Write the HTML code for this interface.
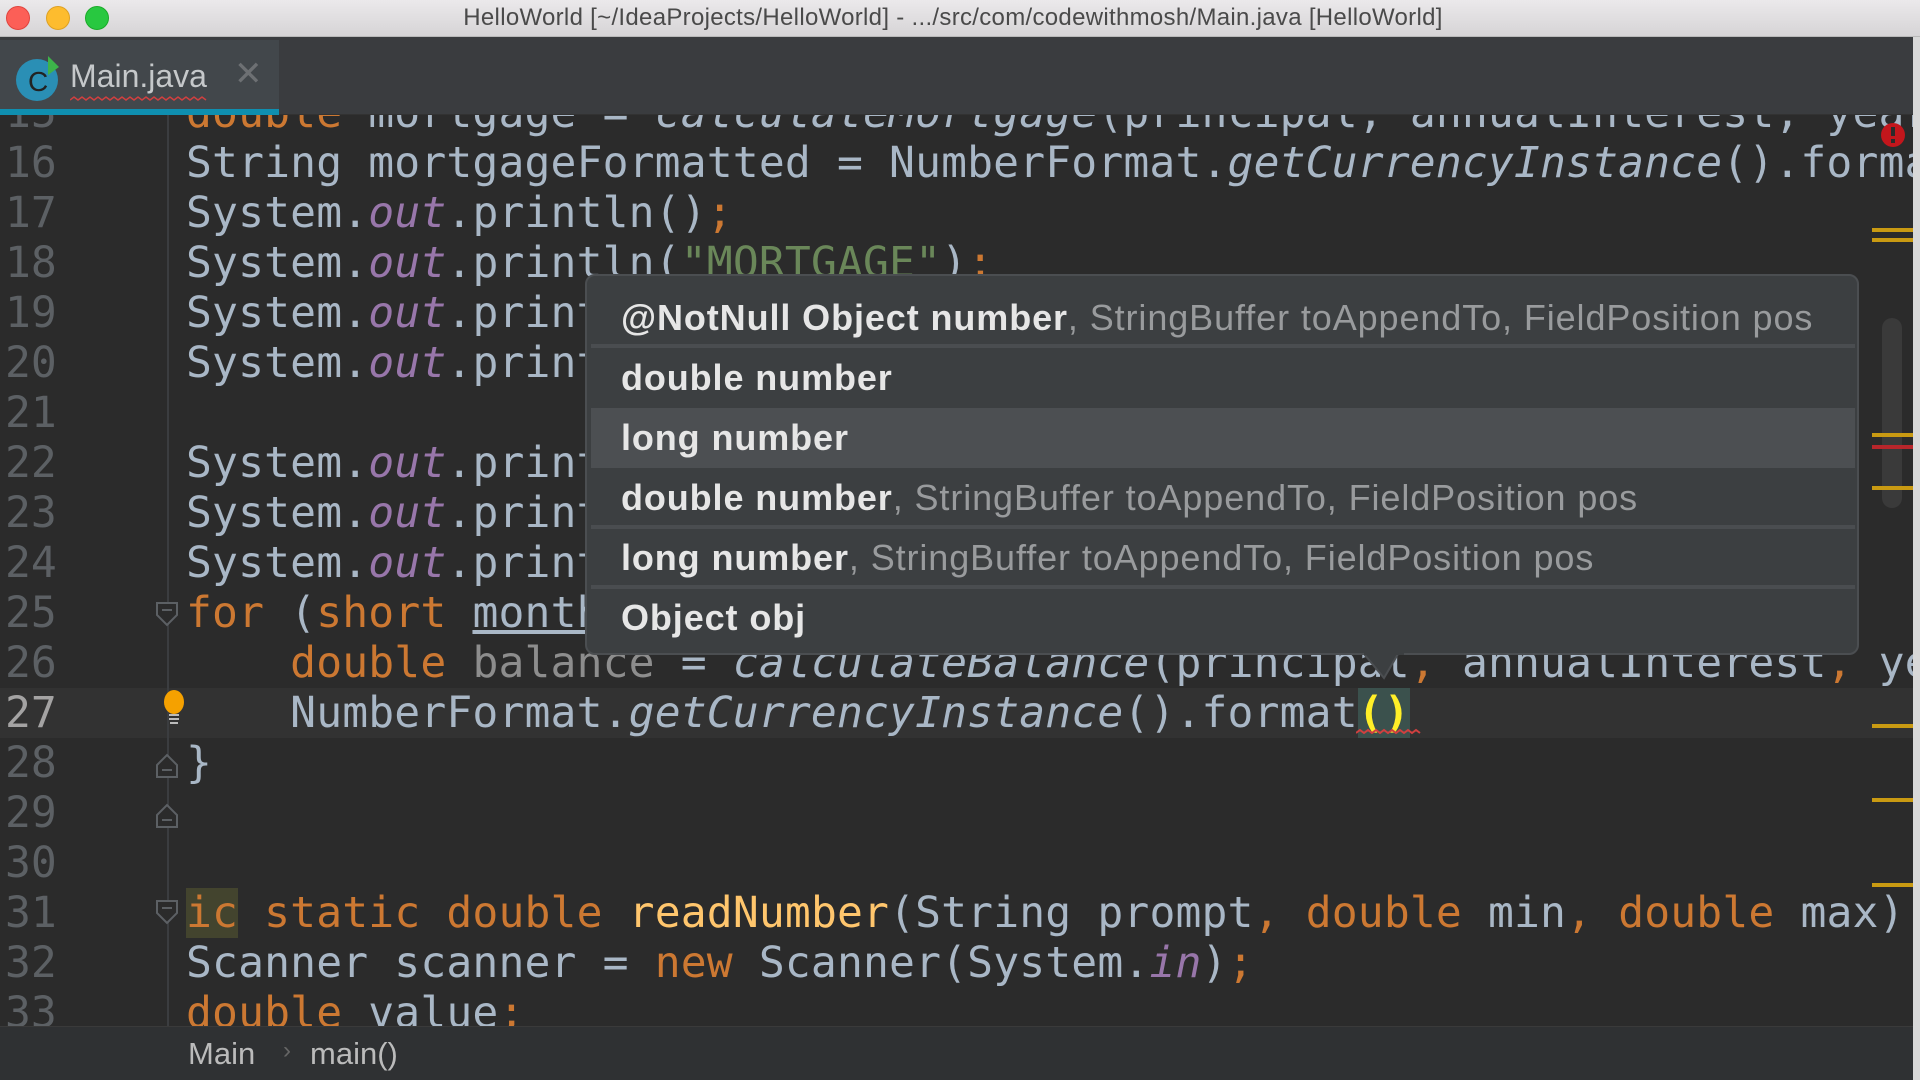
<!DOCTYPE html>
<html><head><meta charset="utf-8"><style>
*{margin:0;padding:0;box-sizing:border-box}
body{width:1920px;height:1080px;overflow:hidden;background:#2b2b2b;position:relative;font-family:"Liberation Sans",sans-serif}
#title{position:absolute;left:0;top:0;width:1920px;height:37px;background:linear-gradient(#ebe9eb,#d6d4d6);border-bottom:1px solid #b9b9b9}
#title .t{position:absolute;left:0;width:1906px;text-align:center;top:4px;font-size:24px;color:#4a4a4a;letter-spacing:0.3px}
.dot{position:absolute;top:6px;width:24px;height:24px;border-radius:50%}
#tabs{position:absolute;left:0;top:37px;width:1913px;height:78px;background:#3a3c3f;border-bottom:1px solid #323232}
#tab{position:absolute;left:0;top:3px;width:279px;height:75px;background:#42474b}
#tab .ul{position:absolute;left:0;bottom:0;width:279px;height:6px;background:#0f8fb0}
#tab .name{position:absolute;left:70px;top:18px;font-size:32px;color:#c5c8ca}
#tab .x{position:absolute;left:234px;top:14px;font-size:34px;color:#6d7073}
#code{position:absolute;left:0;top:115px;width:1913px;height:911px;overflow:hidden;background:#2b2b2b}
.ln{position:absolute;left:0;width:150px;font:43px "DejaVu Sans Mono",monospace;color:#5c6064;line-height:50px;padding-left:5px}
.cl{position:absolute;left:186px;white-space:pre;font:43px "DejaVu Sans Mono",monospace;color:#a9b7c6;line-height:50px;letter-spacing:0.15px}
.k{color:#cc7832}.f{color:#9876aa;font-style:italic}.s{color:#6a8759}.i{font-style:italic}.m{color:#ffc66d}
#gl{position:absolute;left:167px;top:0;width:2px;height:911px;background:#3b3d40}
#popup{position:absolute;left:585px;top:274px;width:1274px;height:381px;background:#3c3f41;border:2px solid #4b4e51;border-radius:10px;overflow:hidden}
.row{position:absolute;left:4px;width:1264px;height:60px;background:#3c3f41;font-size:36px;color:#999b9d;line-height:60px;padding-left:30px;white-space:nowrap;letter-spacing:0.9px}
.row b{color:#e6e6e6}
#right{position:absolute;left:1913px;top:37px;width:7px;height:1043px;background:#d8d8d8}
.mk{position:absolute;left:1872px;width:41px;height:4px;background:#c99a12}
#bottom{position:absolute;left:0;top:1026px;width:1913px;height:54px;background:#2f3133;border-top:1px solid #3a3a3a;font-size:31px;color:#bbbbbb}
</style></head><body>
<div id="title">
<div class="dot" style="left:6px;background:#fc5f57;border:1px solid #e0443e"></div>
<div class="dot" style="left:46px;background:#fdbc2e;border:1px solid #dea123"></div>
<div class="dot" style="left:85px;background:#28c840;border:1px solid #1aab29"></div>
<div class="t">HelloWorld [~/IdeaProjects/HelloWorld] - .../src/com/codewithmosh/Main.java [HelloWorld]</div>
</div>
<div id="tabs"><div id="tab">
<svg style="position:absolute;left:13px;top:13px" width="50" height="50"><circle cx="24" cy="27" r="21" fill="#2a8fb5"/><text x="15" y="38" font-family="Liberation Sans" font-size="28" fill="#222">C</text><polygon points="35,3 46,14 35,22" fill="#3db34a"/></svg>
<div class="name">Main.java</div>
<svg style="position:absolute;left:70px;top:56px" width="150" height="6"><path d="M0 4 l4 -3 l4 3 l4 -3 l4 3 l4 -3 l4 3 l4 -3 l4 3 l4 -3 l4 3 l4 -3 l4 3 l4 -3 l4 3 l4 -3 l4 3 l4 -3 l4 3 l4 -3 l4 3 l4 -3 l4 3 l4 -3 l4 3 l4 -3 l4 3 l4 -3 l4 3 l4 -3 l4 3 l4 -3 l4 3 l4 -3 l4 3" stroke="#d04040" fill="none" stroke-width="1.5"/></svg>
<div class="x">✕</div>
<div class="ul"></div></div></div>

<div id="code">
<div style="position:absolute;left:0;top:573px;width:1913px;height:50px;background:#323232"></div>
<div id="gl"></div>
<div class="ln" style="top:-27px">15</div>
<div class="ln" style="top:23px">16</div>
<div class="ln" style="top:73px">17</div>
<div class="ln" style="top:123px">18</div>
<div class="ln" style="top:173px">19</div>
<div class="ln" style="top:223px">20</div>
<div class="ln" style="top:273px">21</div>
<div class="ln" style="top:323px">22</div>
<div class="ln" style="top:373px">23</div>
<div class="ln" style="top:423px">24</div>
<div class="ln" style="top:473px">25</div>
<div class="ln" style="top:523px">26</div>
<div class="ln" style="top:573px;color:#a4a3a3">27</div>
<div class="ln" style="top:623px">28</div>
<div class="ln" style="top:673px">29</div>
<div class="ln" style="top:723px">30</div>
<div class="ln" style="top:773px">31</div>
<div class="ln" style="top:823px">32</div>
<div class="ln" style="top:873px">33</div>

<div class="cl" style="top:-27px"><span class="k">double</span> mortgage = <span class="i">calculateMortgage</span>(principal, annualInterest, years);</div>
<div class="cl" style="top:23px">String mortgageFormatted = NumberFormat.<span class="i">getCurrencyInstance</span>().format(mortgage);</div>
<div class="cl" style="top:73px">System.<span class="f">out</span>.println()<span class="k">;</span></div>
<div class="cl" style="top:123px">System.<span class="f">out</span>.println(<span class="s">"MORTGAGE"</span>)<span class="k">;</span></div>
<div class="cl" style="top:173px">System.<span class="f">out</span>.println</div>
<div class="cl" style="top:223px">System.<span class="f">out</span>.println</div>
<div class="cl" style="top:323px">System.<span class="f">out</span>.println</div>
<div class="cl" style="top:373px">System.<span class="f">out</span>.println</div>
<div class="cl" style="top:423px">System.<span class="f">out</span>.println</div>
<div class="cl" style="top:473px"><span class="k">for</span> (<span class="k">short</span> <u>month</u> = 1</div>
<div class="cl" style="top:523px">    <span class="k">double</span> <span style="color:#8d8d8d">balance</span> = <span class="i">calculateBalance</span>(principal<span class="k">,</span> annualInterest<span class="k">,</span> years</div>
<div class="cl" style="top:573px">    NumberFormat.<span class="i">getCurrencyInstance</span>().format<span style="color:#ffef28;font-weight:bold;background:#3b514d">()</span></div>
<div class="cl" style="top:623px">}</div>
<div class="cl" style="top:773px"><span class="k" style="background:#43442e">ic</span> <span class="k">static double</span> <span class="m">readNumber</span>(String prompt<span class="k">,</span> <span class="k">double</span> min<span class="k">,</span> <span class="k">double</span> max)</div>
<div class="cl" style="top:823px">Scanner scanner = <span class="k">new</span> Scanner(System.<span class="f">in</span>)<span class="k">;</span></div>
<div class="cl" style="top:873px"><span class="k">double</span> value<span class="k">;</span></div>
<svg style="position:absolute;left:1356px;top:613px" width="80" height="8"><path d="M0 5 l4 -3 l4 3 l4 -3 l4 3 l4 -3 l4 3 l4 -3 l4 3 l4 -3 l4 3 l4 -3 l4 3 l4 -3 l4 3 l4 -3 l4 3" stroke="#d04040" fill="none" stroke-width="2"/></svg>
<svg style="position:absolute;left:155px;top:570px" width="40" height="50"><ellipse cx="19" cy="17" rx="10" ry="12" fill="#f5a100"/><rect x="14" y="29" width="10" height="2" fill="#bbb"/><rect x="14" y="33" width="10" height="2" fill="#bbb"/><rect x="15" y="37" width="8" height="2" fill="#bbb"/></svg>
<svg style="position:absolute;left:154px;top:485px" width="30" height="30"><path d="M3 3 h20 v12 l-10 10 l-10 -10z" fill="#2b2b2b" stroke="#5c6064" stroke-width="2"/><path d="M8 10 h10" stroke="#5c6064" stroke-width="2"/></svg>
<svg style="position:absolute;left:154px;top:635px" width="30" height="30"><path d="M3 27 h20 v-12 l-10 -10 l-10 10z" fill="#2b2b2b" stroke="#5c6064" stroke-width="2"/><path d="M8 20 h10" stroke="#5c6064" stroke-width="2"/></svg>
<svg style="position:absolute;left:154px;top:685px" width="30" height="30"><path d="M3 27 h20 v-12 l-10 -10 l-10 10z" fill="#2b2b2b" stroke="#5c6064" stroke-width="2"/><path d="M8 20 h10" stroke="#5c6064" stroke-width="2"/></svg>
<svg style="position:absolute;left:154px;top:783px" width="30" height="30"><path d="M3 3 h20 v12 l-10 10 l-10 -10z" fill="#2b2b2b" stroke="#5c6064" stroke-width="2"/><path d="M8 10 h10" stroke="#5c6064" stroke-width="2"/></svg>
<div style="position:absolute;left:1882px;top:203px;width:20px;height:190px;border-radius:10px;background:#3a3a3a"></div>
<svg style="position:absolute;left:1880px;top:7px" width="26" height="26"><circle cx="13" cy="13" r="12" fill="#c3161c"/><rect x="11" y="5" width="4" height="9" fill="#2b2b2b"/><rect x="11" y="17" width="4" height="4" fill="#2b2b2b"/></svg>
</div>
<div class="mk" style="top:228px"></div><div class="mk" style="top:238px"></div>
<div class="mk" style="top:433px"></div>
<div class="mk" style="top:445px;background:#b8262b"></div>
<div class="mk" style="top:486px"></div>
<div class="mk" style="top:724px"></div>
<div class="mk" style="top:798px"></div>
<div class="mk" style="top:883px"></div>

<div id="popup">
<div class="row" style="top:12px"><b>@NotNull Object number</b>, StringBuffer toAppendTo, FieldPosition pos</div>
<div class="row" style="top:72px"><b>double number</b></div>
<div class="row" style="top:132px;background:#4c4f52"><b>long number</b></div>
<div class="row" style="top:192px"><b>double number</b>, StringBuffer toAppendTo, FieldPosition pos</div>
<div class="row" style="top:252px"><b>long number</b>, StringBuffer toAppendTo, FieldPosition pos</div>
<div class="row" style="top:312px;height:63px"><b>Object obj</b></div>
<div style="position:absolute;left:4px;top:68px;width:1264px;height:4px;background:#4a4d50"></div>
<div style="position:absolute;left:4px;top:249px;width:1264px;height:4px;background:#4a4d50"></div>
<div style="position:absolute;left:4px;top:309px;width:1264px;height:4px;background:#4a4d50"></div>
</div>
<svg style="position:absolute;left:1364px;top:652px" width="40" height="30"><path d="M0 2 L20 26 L34 2 Z" fill="#3c3f41" stroke="#4b4e51" stroke-width="2"/><rect x="0" y="0" width="40" height="3" fill="#3c3f41"/></svg>

<div id="right"></div>
<div id="bottom"><span style="position:absolute;left:188px;top:9px">Main</span><span style="position:absolute;left:283px;top:10px;color:#666;font-size:24px">›</span><span style="position:absolute;left:310px;top:9px">main()</span></div>
</body></html>
